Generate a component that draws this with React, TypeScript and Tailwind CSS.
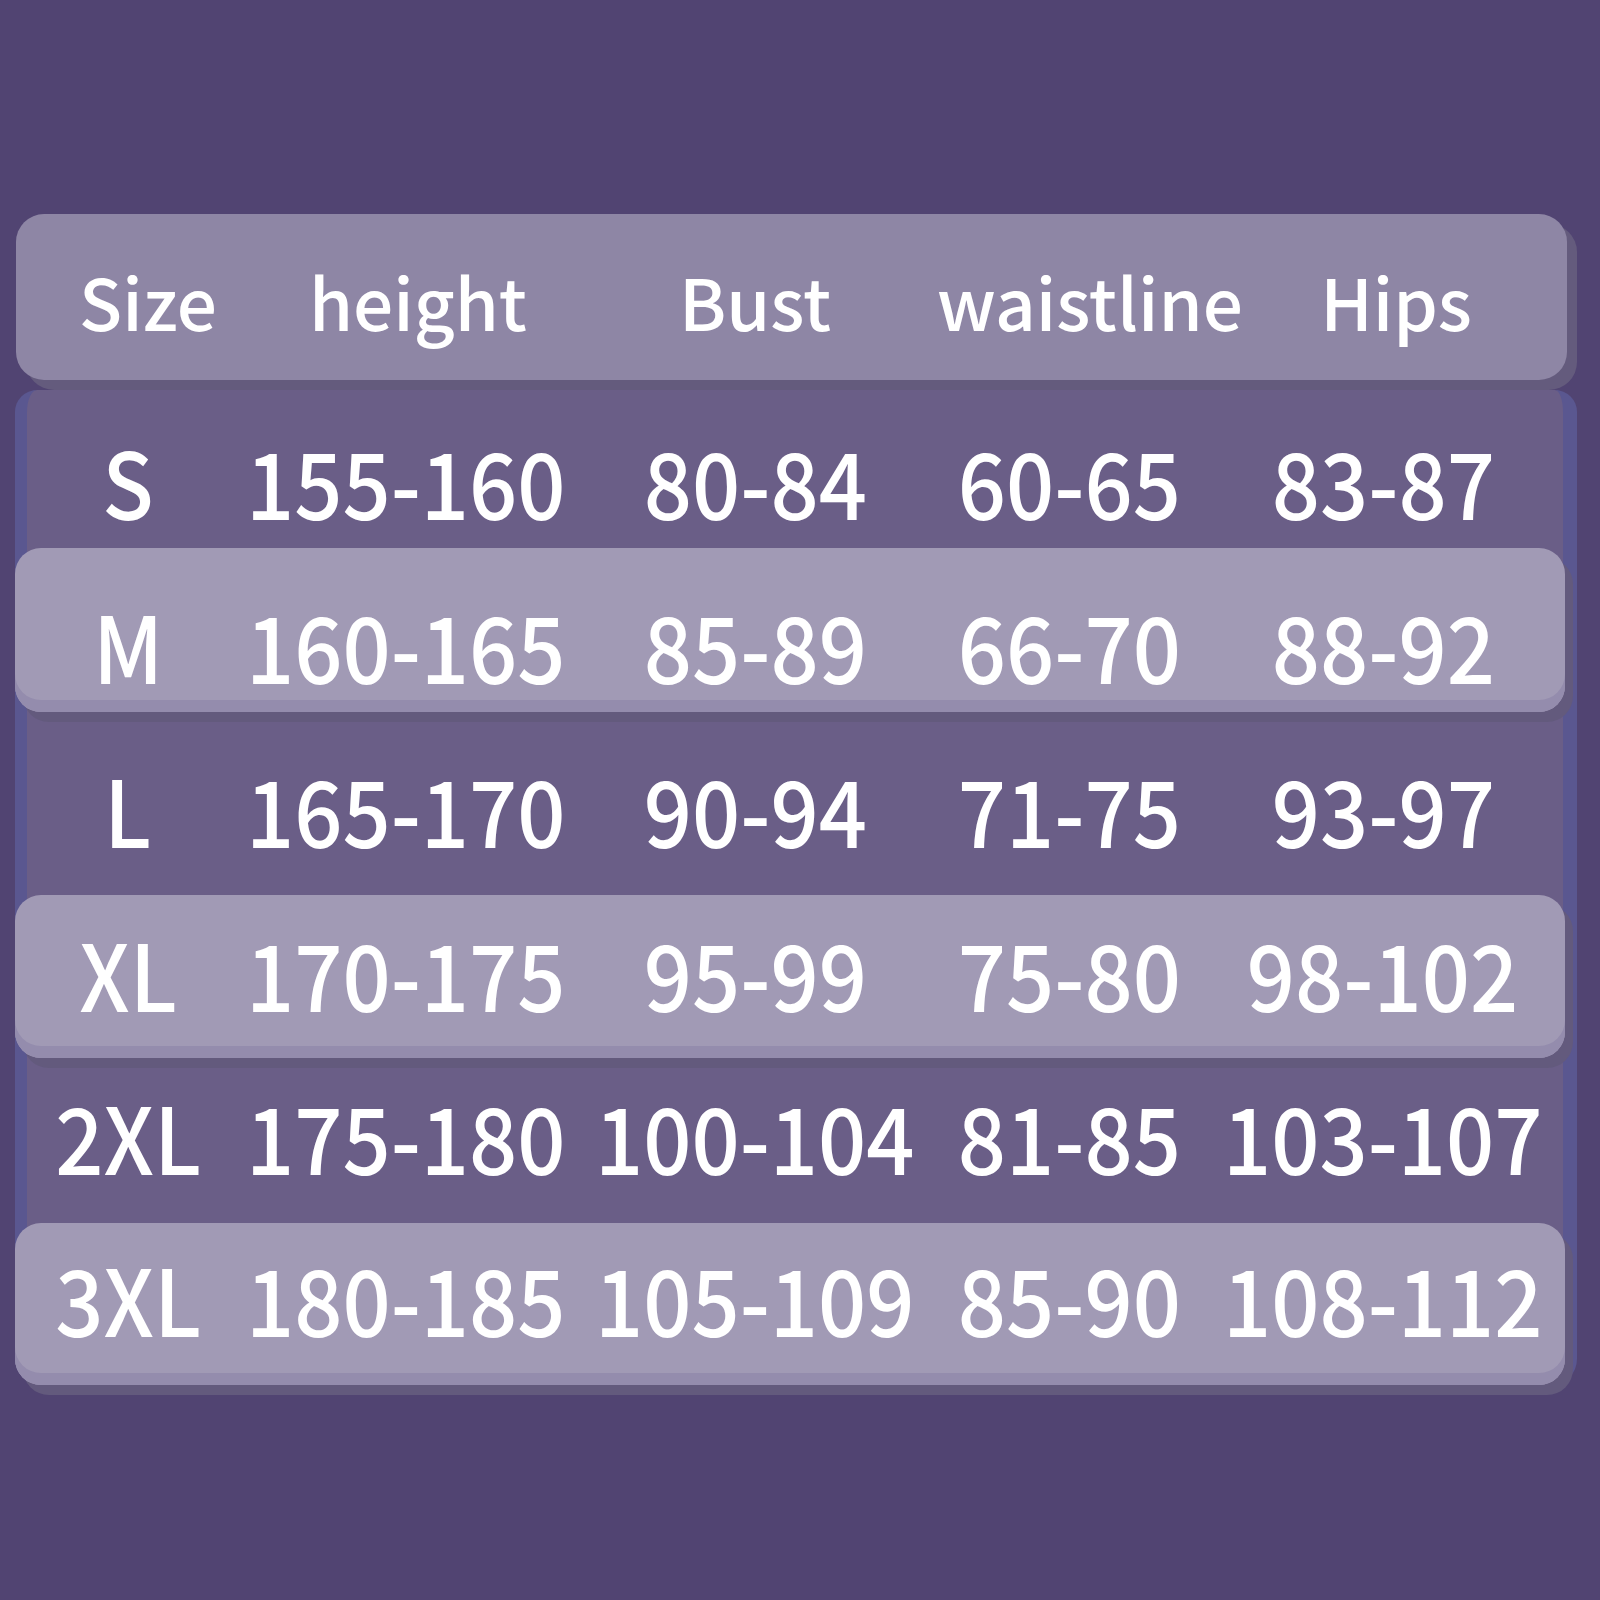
const headers = ["Size", "height", "Bust", "waistline", "Hips"];

const rows = [
  { cells: ["S", "155-160", "80-84", "60-65", "83-87"], light: false, h: "h-[158px]", pt: "pt-[44px]" },
  { cells: ["M", "160-165", "85-89", "66-70", "88-92"], light: true, h: "h-[164px]", pt: "pt-[50px]" },
  { cells: ["L", "165-170", "90-94", "71-75", "93-97"], light: false, h: "h-[173px]", pt: "pt-[40px]" },
  { cells: ["XL", "170-175", "95-99", "75-80", "98-102"], light: true, h: "h-[163px]", pt: "pt-[31px]" },
  { cells: ["2XL", "175-180", "100-104", "81-85", "103-107"], light: false, h: "h-[155px]", pt: "pt-[21px]" },
  { cells: ["3XL", "180-185", "105-109", "85-90", "108-112"], light: true, h: "h-[162px]", pt: "pt-[28px]" },
];

function Row({ cells, light, h, pt }: { cells: string[]; light: boolean; h: string; pt: string }) {
  return (
    <div
      className={`-ml-[12px] -mr-[2px] ${h} ${pt} grid grid-cols-[226px_330px_368px_260px_368px] ${
        light
          ? "bg-[#a19ab5] rounded-[26px] shadow-[inset_0_-12px_0_#948cad,8px_10px_0_#635a7d] relative z-10 mb-[10px]"
          : ""
      }`}
    >
      {cells.map((c, i) => (
        <div key={i} className="flex justify-center">
          <span className="text-[92px] leading-none text-white font-medium whitespace-nowrap scale-x-[0.92]">
            {c}
          </span>
        </div>
      ))}
    </div>
  );
}

export default function App() {
  return (
    <div
      className="w-[1600px] h-[1600px] bg-[#514472] pt-[214px] pl-[15px] overflow-hidden"
      style={{ fontFamily: '"Noto Sans CJK SC", "Noto Sans", sans-serif' }}
    >
      <div className="ml-[1px] w-[1551px] h-[166px] rounded-[28px] bg-[#8e86a5] shadow-[10px_10px_0_#645b7d] grid grid-cols-[264px_276px_398px_272px_340px] items-center pt-[6px]">
        {headers.map((t) => (
          <div key={t} className="flex justify-center">
            <span className="text-[71px] leading-none text-white font-medium whitespace-nowrap">{t}</span>
          </div>
        ))}
      </div>
      <div className="mt-[10px] w-[1562px] bg-[#6a5e87] border-l-[12px] border-r-[14px] border-[#5a5790] rounded-t-[22px] rounded-b-[26px]">
        {rows.map((r) => (
          <Row key={r.cells[0]} {...r} />
        ))}
      </div>
    </div>
  );
}
